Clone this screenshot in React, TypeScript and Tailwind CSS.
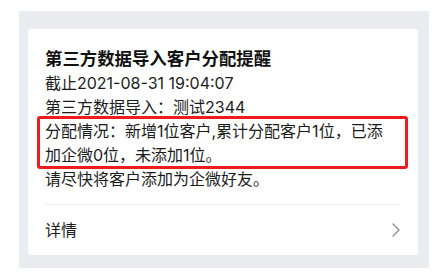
import { ChevronRight } from 'lucide-react';

export default function App() {
  return (
    <div className="w-[438px] h-[273px] bg-white pl-[19px] pt-[11px] font-['Inter','Noto_Sans_CJK_SC',sans-serif] text-[#1c1c1c]">
      <div className="w-[410px] h-[257px] bg-[#ebecf0] pl-[9px] pt-[18px]">
        <div className="w-[390px] h-[226px] bg-white rounded-[3px] px-[17px] flex flex-col">
          <h2 className="mt-[18px] text-[17.4px] leading-[24px] font-bold text-[#111]">
            第三方数据导入客户分配提醒
          </h2>
          <div className="text-[16px] leading-[24px]">
            <p>截止2021-08-31 19:04:07</p>
            <p>第三方数据导入：测试2344</p>
            <div className="relative">
              <p>
                分配情况：新增1位客户,累计分配客户1位，已添
                <br />
                加企微0位，未添加1位。
              </p>
              <div className="absolute -left-[8px] -right-[7px] -top-[3px] -bottom-[2px] border-[3px] border-[#f01c1c] rounded-[3px]" />
            </div>
            <p>请尽快将客户添加为企微好友。</p>
          </div>
          <div className="mt-[13px] h-px bg-[#f2f2f2]" />
          <div className="flex-1 flex items-center justify-between">
            <span className="text-[16px] leading-[24px]">详情</span>
            <ChevronRight className="w-6 h-6 text-[#8c8c8c] -mr-[7px]" strokeWidth={1.3} />
          </div>
        </div>
      </div>
    </div>
  );
}
